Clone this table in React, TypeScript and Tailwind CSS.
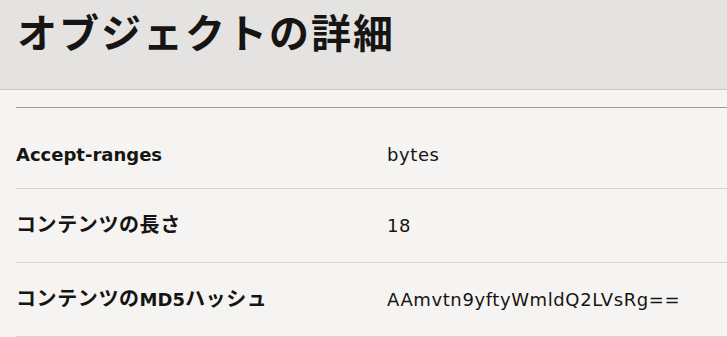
import React from "react";

const rows = [
  { k: "Accept-ranges", v: "bytes" },
  { k: "コンテンツの長さ", v: "18" },
  { k: "コンテンツのMD5ハッシュ", v: "AAmvtn9yftyWmldQ2LVsRg==" },
];

function Label({ text }: { text: string }) {
  const parts = text.split(/([\u3000-\u9fff]+)/).filter((p) => p.length > 0);
  return (
    <>
      {parts.map((p, i) =>
        /[\u3000-\u9fff]/.test(p) ? (
          <span key={i} className="text-[20px] tracking-[0.6px]">
            {p}
          </span>
        ) : (
          <span key={i}>{p}</span>
        )
      )}
    </>
  );
}

export default function App() {
  return (
    <div
      className="w-[727px] h-[337px] overflow-hidden bg-[#f5f4f2] text-[#161513]"
      style={{ fontFamily: '"DejaVu Sans", "Noto Sans CJK JP", sans-serif' }}
    >
      <div
        className="h-[90px] bg-[#e4e3e1] border-b border-[#c9c8c6] pl-[17px] pt-[6px]"
        style={{ fontFamily: '"Noto Sans", "Noto Sans CJK JP", sans-serif' }}
      >
        <h1 className="text-[40px] leading-[54px] font-bold tracking-[2px]">オブジェクトの詳細</h1>
      </div>
      <div className="pl-4 pt-[17px]">
        <div className="border-t border-[#9d9c9a]">
          {rows.map((r, i) => (
            <div
              key={i}
              className={
                "flex items-center border-b border-[#d7d6d4] text-[18px] leading-[26px] " +
                (i === 0 ? "h-[81px] pt-[13px]" : "h-[74px]")
              }
            >
              <div className="w-[371px] font-bold">
                <Label text={r.k} />
              </div>
              <div className="tracking-[0.6px]">{r.v}</div>
            </div>
          ))}
        </div>
      </div>
    </div>
  );
}
